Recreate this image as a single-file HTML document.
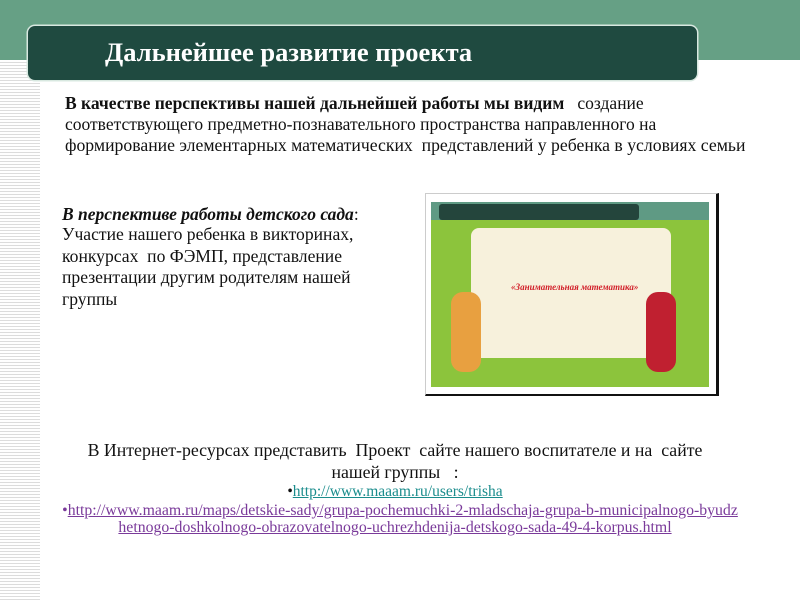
<!DOCTYPE html>
<html><head><meta charset="utf-8"><style>
body{margin:0;width:800px;height:600px;position:relative;overflow:hidden;background:#fff;font-family:"Liberation Serif","Noto Serif CJK SC",serif;}
.band{position:absolute;left:0;top:0;width:800px;height:60px;background:#66a085;}
.stripes{position:absolute;left:0;top:60px;width:40px;height:540px;background:repeating-linear-gradient(#fff 0 2px,#dcdcdc 2px 3px);}
.title{position:absolute;left:28px;top:26px;width:669px;height:54px;background:#1f4a40;border-radius:7px;box-shadow:0 0 0 1.5px #d8e8e0;}
.title span{position:absolute;left:77px;top:11px;line-height:30px;color:#fff;font-weight:bold;font-size:26.5px;white-space:nowrap;}
.t{position:absolute;white-space:nowrap;color:#111;line-height:20px;}
.c{left:0;width:790px;text-align:center;}
a{text-decoration:underline;}
</style></head><body>
<div class="band"></div><div class="stripes"></div>
<div class="title"><span>Дальнейшее развитие проекта</span></div>

<div class="t" style="left:65px;top:93px;font-size:17.5px;"><b>В качестве перспективы нашей дальнейшей работы мы видим</b>&nbsp;&nbsp; создание</div>
<div class="t" style="left:65px;top:114px;font-size:17.5px;">соответствующего предметно-познавательного пространства направленного на</div>
<div class="t" style="left:65px;top:135px;font-size:17.7px;">формирование элементарных математических&nbsp; представлений у ребенка в условиях семьи</div>

<div class="t" style="left:62px;top:204px;font-size:17.5px;"><b><i>В перспективе работы детского сада</i></b>:</div>
<div class="t" style="left:62px;top:224px;font-size:17.6px;">Участие нашего ребенка в викторинах,</div>
<div class="t" style="left:62px;top:246px;font-size:17.6px;">конкурсах&nbsp; по ФЭМП, представление</div>
<div class="t" style="left:62px;top:267px;font-size:17.6px;">презентации другим родителям нашей</div>
<div class="t" style="left:62px;top:289px;font-size:17.6px;">группы</div>

<div style="position:absolute;left:425px;top:193px;width:290px;height:200px;border:1px solid #ccc;border-right:3px solid #111;border-bottom:2px solid #111;background:#fff;">
 <div style="position:absolute;left:5px;top:8px;width:278px;height:185px;background:#8cc43c;">
  <div style="position:absolute;left:0;top:0;width:278px;height:18px;background:#5f9a84;"></div>
  <div style="position:absolute;left:8px;top:2px;width:200px;height:16px;background:#24453c;border-radius:3px;"></div>
  <div style="position:absolute;left:40px;top:26px;width:200px;height:130px;background:#f7f1dc;border-radius:8px;"></div>
  <div style="position:absolute;left:80px;top:80px;color:#d2202a;font-style:italic;font-weight:bold;font-size:9px;white-space:nowrap;">«Занимательная математика»</div>
  <div style="position:absolute;left:20px;top:90px;width:30px;height:80px;background:#e8a040;border-radius:12px;"></div>
  <div style="position:absolute;left:215px;top:90px;width:30px;height:80px;background:#c02030;border-radius:12px;"></div>
 </div>
</div>

<div class="t c" style="top:440px;font-size:17.8px;">В Интернет-ресурсах представить&nbsp; Проект&nbsp; сайте нашего воспитателе и на&nbsp; сайте</div>
<div class="t c" style="top:462px;font-size:17.8px;">нашей группы&nbsp;&nbsp; :</div>
<div class="t c" style="top:482px;font-size:15.5px;">•<a style="color:#1a8c8c">http://www.maaam.ru/users/trisha</a></div>
<div class="t c" style="top:501px;font-size:15.8px;color:#7a3a9a;width:800px;">•<a style="color:#7a3a9a">http://www.maam.ru/maps/detskie-sady/grupa-pochemuchki-2-mladschaja-grupa-b-municipalnogo-byudz</a></div>
<div class="t c" style="top:518px;font-size:15.8px;width:790px;"><a style="color:#7a3a9a">hetnogo-doshkolnogo-obrazovatelnogo-uchrezhdenija-detskogo-sada-49-4-korpus.html</a></div>
</body></html>
